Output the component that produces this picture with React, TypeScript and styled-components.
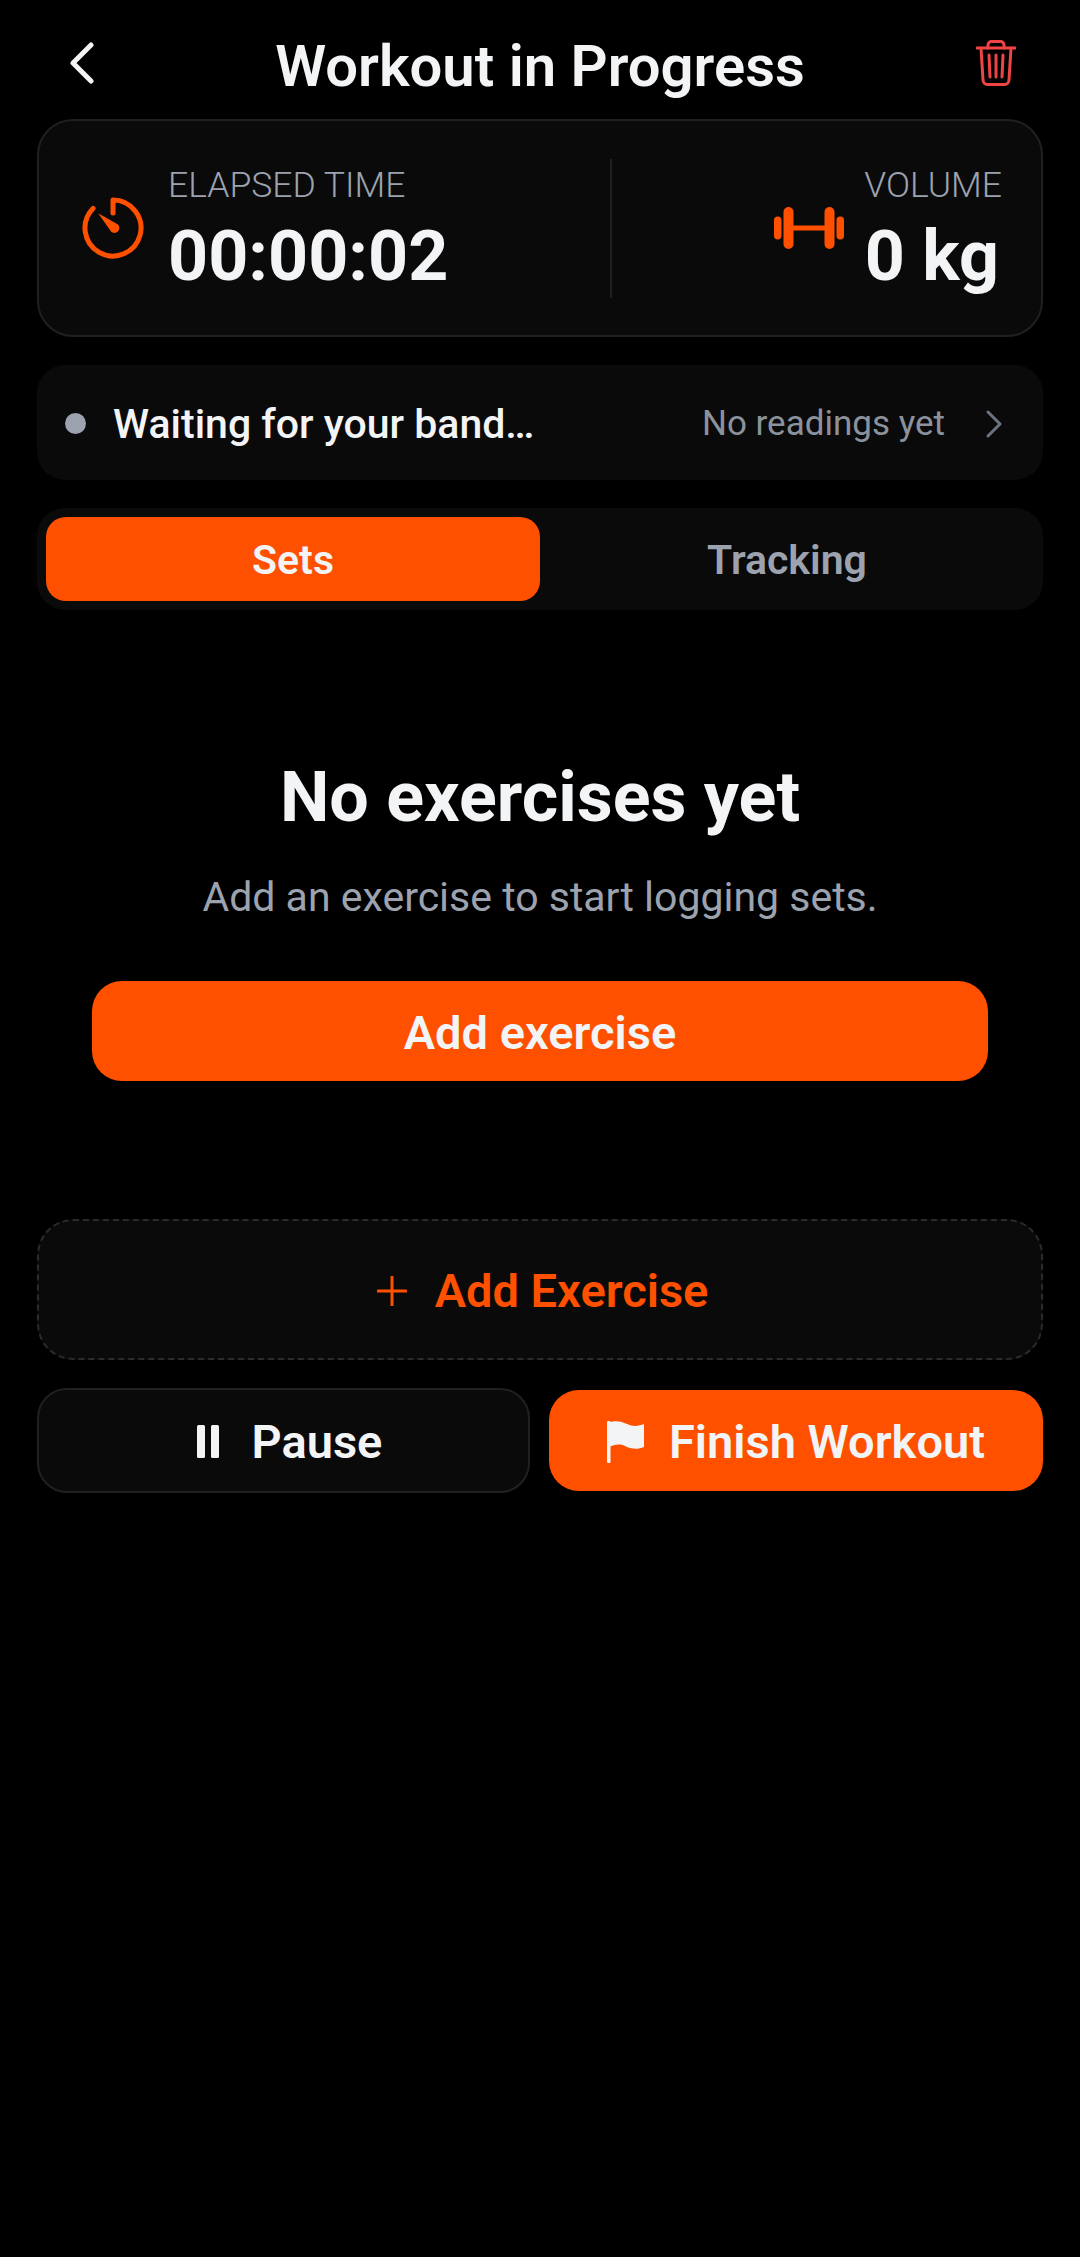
import React from "react";
import styled, { createGlobalStyle } from "styled-components";

const ORANGE = "#ff5000";
const TEXT = "#f3f4f6";
const MUTED = "#9ca3af";
const SURFACE = "#0a0a0b";
const LINE = "#1f2022";

const GlobalStyle = createGlobalStyle`
  html, body {
    margin: 0;
    background: #000;
    font-family: Roboto, "Liberation Sans", sans-serif;
  }
  * { box-sizing: border-box; }
`;

const Page = styled.div`
  width: 1080px;
  min-height: 2257px;
  padding: 0 37px;
  background: #000;
  color: ${TEXT};
`;

const Header = styled.header`
  height: 119px;
  padding: 0 27px;
  display: grid;
  grid-template-columns: 1fr auto 1fr;
  align-items: start;
`;

const BackIcon = styled.svg`
  justify-self: start;
  margin: 42px 0 0 6px;
`;

const TrashIcon = styled.svg`
  justify-self: end;
  margin-top: 40px;
`;

const Title = styled.h1`
  margin: 33px 0 0;
  font-size: 58px;
  line-height: 66px;
  font-weight: 600;
`;

const StatsCard = styled.section`
  height: 218px;
  padding: 0 39px 0 42px;
  display: flex;
  align-items: center;
  justify-content: space-between;
  background: ${SURFACE};
  border: 2px solid ${LINE};
  border-radius: 36px;
`;

const Stat = styled.div`
  display: flex;
  align-items: center;
`;

const StatText = styled.div<{ $end?: boolean }>`
  display: flex;
  flex-direction: column;
  align-items: ${(p) => (p.$end ? "flex-end" : "flex-start")};
  margin-top: 7px;
  margin-left: ${(p) => (p.$end ? "20px" : "23px")};
`;

const StatLabel = styled.span`
  font-size: 35.5px;
  line-height: 40px;
  color: ${MUTED};
  font-weight: 300;
`;

const StatValue = styled.span<{ $end?: boolean }>`
  margin: 9px ${(p) => (p.$end ? "3px" : "0")} 0 0;
  font-size: 70px;
  line-height: 84px;
  font-weight: 700;
`;

const Divider = styled.div`
  width: 2px;
  height: 139px;
  background: ${LINE};
`;

const StatusRow = styled.div`
  height: 115px;
  margin-top: 28px;
  padding: 2px 41px 0 28px;
  display: flex;
  align-items: center;
  background: ${SURFACE};
  border-radius: 28px;
`;

const Dot = styled.span`
  width: 21px;
  height: 21px;
  border-radius: 50%;
  background: ${MUTED};
`;

const StatusText = styled.span`
  flex: 1;
  margin-left: 27px;
  font-size: 41px;
  font-weight: 500;
`;

const Reading = styled.span`
  font-size: 35px;
  color: #8b929c;
  margin-right: 41px;
`;

const Tabs = styled.div`
  height: 102px;
  margin-top: 28px;
  padding: 9px;
  display: grid;
  grid-template-columns: 1fr 1fr;
  background: ${SURFACE};
  border-radius: 28px;
`;

const Tab = styled.div<{ $active?: boolean }>`
  display: flex;
  align-items: center;
  justify-content: center;
  padding-top: 2px;
  border-radius: 20px;
  font-size: 41px;
  font-weight: 600;
  background: ${(p) => (p.$active ? ORANGE : "transparent")};
  color: ${(p) => (p.$active ? TEXT : MUTED)};
`;

const Empty = styled.section`
  padding: 149px 55px 138px;
  display: flex;
  flex-direction: column;
  align-items: center;
`;

const EmptyTitle = styled.h2`
  margin: 0;
  font-size: 70px;
  line-height: 76px;
  font-weight: 700;
`;

const EmptyText = styled.p`
  margin: 37px 0 0;
  font-size: 41px;
  line-height: 50px;
  color: ${MUTED};
`;

const PrimaryWide = styled.div`
  width: 100%;
  height: 100px;
  margin-top: 59px;
  padding-top: 2px;
  display: flex;
  align-items: center;
  justify-content: center;
  background: ${ORANGE};
  border-radius: 30px;
  font-size: 47px;
  font-weight: 600;
`;

const AddRow = styled.div`
  height: 141px;
  padding: 2px 0 0 5px;
  display: flex;
  align-items: center;
  justify-content: center;
  gap: 28px;
  background: ${SURFACE};
  border: 2px dashed #2a2b2d;
  border-radius: 36px;
  color: ${ORANGE};
  font-size: 47px;
  font-weight: 600;
`;

const Actions = styled.div`
  margin-top: 28px;
  display: grid;
  grid-template-columns: 493px 494px;
  gap: 19px;
  align-items: center;
`;

const ActionButton = styled.div<{ $primary?: boolean }>`
  height: ${(p) => (p.$primary ? "101px" : "105px")};
  padding: 2px 0 0 ${(p) => (p.$primary ? "0" : "12px")};
  display: flex;
  align-items: center;
  justify-content: center;
  gap: ${(p) => (p.$primary ? "25px" : "33px")};
  border-radius: 30px;
  font-size: 47px;
  font-weight: 600;
  background: ${(p) => (p.$primary ? ORANGE : SURFACE)};
  border: ${(p) => (p.$primary ? "none" : `2px solid ${LINE}`)};
`;

const Stopwatch = () => (
  <svg width="64" height="64" viewBox="0 0 64 64" fill="none">
    <path
      d="M32 17V4A28 28 0 1 1 12 12.4"
      stroke={ORANGE}
      strokeWidth="5"
      strokeLinecap="round"
      strokeLinejoin="round"
    />
    <path d="M17.2 17.2L37 28.6A4.6 4.6 0 0 1 30 35.4Z" fill={ORANGE} />
  </svg>
);

const Dumbbell = () => (
  <svg width="70" height="42" viewBox="0 0 70 42" fill={ORANGE}>
    <rect x="0" y="9.5" width="7.5" height="23" rx="3.7" />
    <rect x="9.5" y="0" width="10" height="42" rx="5" />
    <rect x="18" y="18.5" width="34" height="5" />
    <rect x="50.5" y="0" width="10" height="42" rx="5" />
    <rect x="62.5" y="9.5" width="7.5" height="23" rx="3.7" />
  </svg>
);

const Flag = () => (
  <svg width="37" height="42" viewBox="0 0 37 42" fill={TEXT}>
    <rect x="0" y="0" width="3.5" height="42" rx="1" />
    <path d="M0 2C8-1 14 0 20 3C26 6 32 5 37 3V26C30 29 24 28 18 25C12 22 6 24 0 27Z" />
  </svg>
);

export default function App() {
  return (
    <Page>
      <GlobalStyle />
      <Header>
        <BackIcon width="24" height="42" viewBox="0 0 24 42" fill="none">
          <path
            d="M21 3L3 21L21 39"
            stroke={TEXT}
            strokeWidth="5"
            strokeLinecap="round"
            strokeLinejoin="round"
          />
        </BackIcon>
        <Title>Workout in Progress</Title>
        <TrashIcon width="40" height="46" viewBox="0 0 40 46" fill="none">
          <g stroke="#ef4444" strokeWidth="3" strokeLinecap="round" strokeLinejoin="round">
            <path d="M1 8H39" />
            <path d="M12 8V5A3.5 3.5 0 0 1 15.5 1.5H24.5A3.5 3.5 0 0 1 28 5V8" />
            <path d="M5 8L7 40A4.5 4.5 0 0 0 11.5 44.5H28.5A4.5 4.5 0 0 0 33 40L35 8" />
            <path d="M13 15L14 37M20 15V37M27 15L26 37" />
          </g>
        </TrashIcon>
      </Header>

      <StatsCard>
        <Stat>
          <Stopwatch />
          <StatText>
            <StatLabel>ELAPSED TIME</StatLabel>
            <StatValue>00:00:02</StatValue>
          </StatText>
        </Stat>
        <Divider />
        <Stat>
          <Dumbbell />
          <StatText $end>
            <StatLabel>VOLUME</StatLabel>
            <StatValue $end>0 kg</StatValue>
          </StatText>
        </Stat>
      </StatsCard>

      <StatusRow>
        <Dot />
        <StatusText>Waiting for your band…</StatusText>
        <Reading>No readings yet</Reading>
        <svg width="16" height="28" viewBox="0 0 16 28" fill="none">
          <path
            d="M2 2L14 14L2 26"
            stroke="#6b7280"
            strokeWidth="3"
            strokeLinecap="round"
            strokeLinejoin="round"
          />
        </svg>
      </StatusRow>

      <Tabs>
        <Tab $active>Sets</Tab>
        <Tab>Tracking</Tab>
      </Tabs>

      <Empty>
        <EmptyTitle>No exercises yet</EmptyTitle>
        <EmptyText>Add an exercise to start logging sets.</EmptyText>
        <PrimaryWide>Add exercise</PrimaryWide>
      </Empty>

      <AddRow>
        <svg width="30" height="30" viewBox="0 0 30 30" fill="none">
          <path d="M15 1V29M1 15H29" stroke={ORANGE} strokeWidth="3" strokeLinecap="round" />
        </svg>
        Add Exercise
      </AddRow>

      <Actions>
        <ActionButton>
          <svg width="22" height="33" viewBox="0 0 22 33" fill={TEXT}>
            <rect x="0" y="0" width="8" height="33" rx="1.5" />
            <rect x="14" y="0" width="8" height="33" rx="1.5" />
          </svg>
          Pause
        </ActionButton>
        <ActionButton $primary>
          <Flag />
          Finish Workout
        </ActionButton>
      </Actions>
    </Page>
  );
}
